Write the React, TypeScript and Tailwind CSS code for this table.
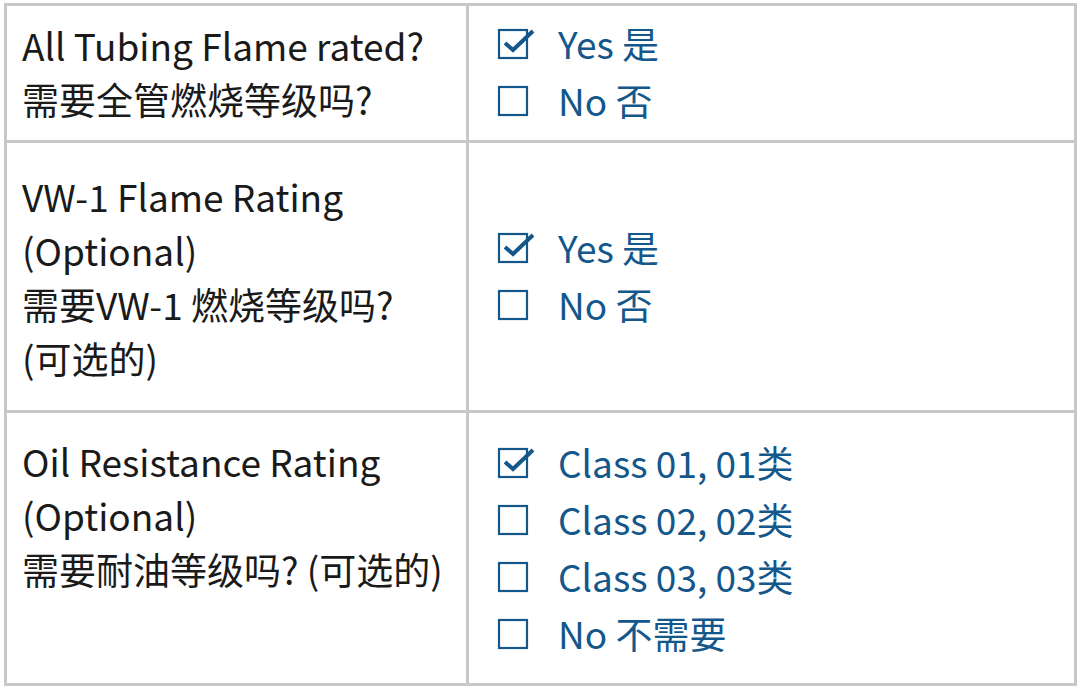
import React from "react";

const FONT = '"Noto Sans CJK SC", "Noto Sans", sans-serif';

function Box({ checked }: { checked: boolean }) {
  return (
    <span className="relative inline-block w-[30px] h-[30px] shrink-0 mr-[30px]">
      <svg width="40" height="32" viewBox="0 0 40 32" className="absolute left-0 top-0 overflow-visible">
        <rect x="1" y="1" width="28" height="28" fill="none" stroke="#14578a" strokeWidth="2.2" />
        {checked && (
          <path d="M7 14 L15 21 L35 2" fill="none" stroke="#14578a" strokeWidth="4" strokeLinejoin="miter" />
        )}
      </svg>
    </span>
  );
}

function Opt({ checked, label }: { checked: boolean; label: string }) {
  return (
    <div className="flex items-center h-[57px]">
      <Box checked={checked} />
      <span className="whitespace-pre">{label}</span>
    </div>
  );
}

export default function App() {
  return (
    <div className="w-[1080px] h-[690px] bg-white pt-[3px] pl-[4px]" style={{ fontFamily: FONT }}>
      <div className="w-[1073px] grid grid-cols-[462px_1fr] border-t-[3px] border-l-[3px] border-[#c8c8c8] text-[37px] font-normal">
        {/* Row 1 */}
        <div className="h-[137px] border-r-[3px] border-b-[3px] border-[#c8c8c8] flex flex-col justify-center pl-[15px] pb-[2px] leading-[54px] text-[#1a1a1a]">
          <div>All Tubing Flame rated?</div>
          <div>需要全管燃烧等级吗?</div>
        </div>
        <div className="h-[137px] border-r-[3px] border-b-[3px] border-[#c8c8c8] flex flex-col justify-center pl-[29px] pb-[1px] text-[#14578a]">
          <Opt checked label="Yes 是" />
          <Opt checked={false} label="No 否" />
        </div>
        {/* Row 2 */}
        <div className="h-[270px] border-r-[3px] border-b-[3px] border-[#c8c8c8] flex flex-col justify-center pl-[15px] leading-[54px] text-[#1a1a1a]">
          <div>VW-1 Flame Rating</div>
          <div>(Optional)</div>
          <div>需要VW-1 燃烧等级吗?</div>
          <div>(可选的)</div>
        </div>
        <div className="h-[270px] border-r-[3px] border-b-[3px] border-[#c8c8c8] flex flex-col justify-center pl-[29px] text-[#14578a]">
          <Opt checked label="Yes 是" />
          <Opt checked={false} label="No 否" />
        </div>
        {/* Row 3 */}
        <div className="h-[273px] border-r-[3px] border-b-[3px] border-[#c8c8c8] flex flex-col justify-start pt-[21px] pl-[15px] leading-[54px] text-[#1a1a1a]">
          <div>Oil Resistance Rating</div>
          <div>(Optional)</div>
          <div>需要耐油等级吗? (可选的)</div>
        </div>
        <div className="h-[273px] border-r-[3px] border-b-[3px] border-[#c8c8c8] flex flex-col justify-start pt-[21px] pl-[29px] text-[#14578a]">
          <Opt checked label="Class 01, 01类" />
          <Opt checked={false} label="Class 02, 02类" />
          <Opt checked={false} label="Class 03, 03类" />
          <Opt checked={false} label="No 不需要" />
        </div>
      </div>
    </div>
  );
}
